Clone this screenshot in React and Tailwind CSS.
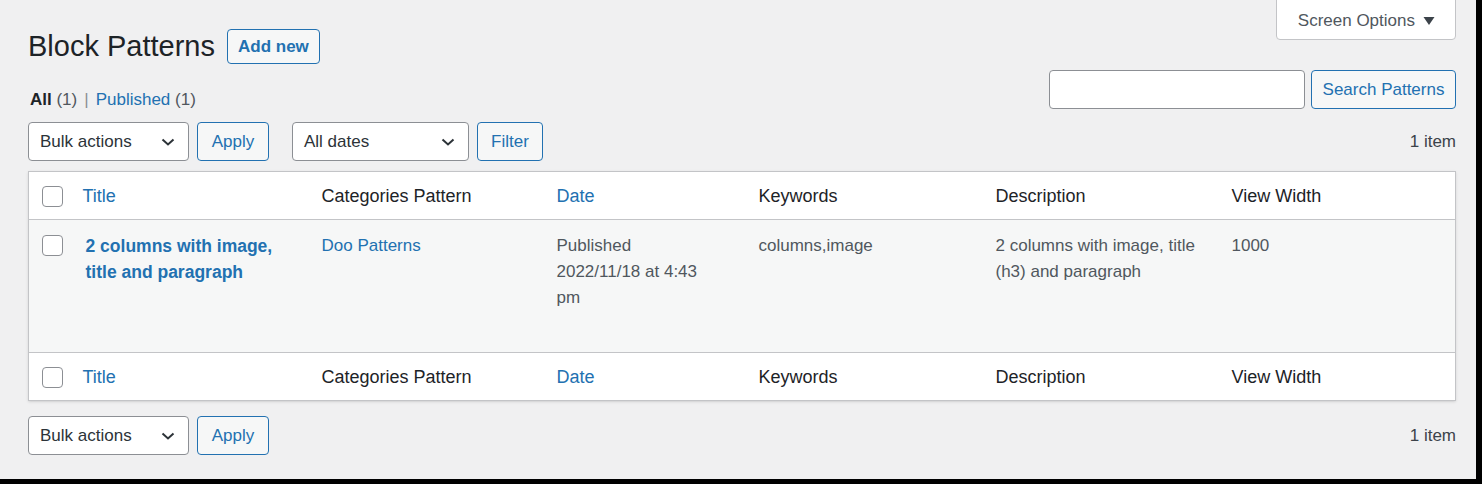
const Chevron = () => (
  <svg width="20" height="20" viewBox="0 0 20 20" className="shrink-0">
    <path d="M4.5 7.5l5.5 5 5.5-5" fill="none" stroke="#2c3338" strokeWidth="2" />
  </svg>
);

const Select = ({ label, width }) => (
  <div
    className={`flex items-center justify-between h-[39px] ${width} pl-[11px] pr-[10px] pt-px bg-white border border-[#8c8f94] rounded-[4px] text-[17px] text-[#2c3338]`}
  >
    <span>{label}</span>
    <Chevron />
  </div>
);

const Button = ({ children, className = '' }) => (
  <button
    className={`h-[39px] px-[10px] pt-px whitespace-nowrap bg-[#f6f7f7] border border-[#2271b1] rounded-[4px] text-[17px] text-[#2271b1] ${className}`}
  >
    {children}
  </button>
);

const Checkbox = () => (
  <span className="block w-[21px] h-[21px] bg-white border border-[#8c8f94] rounded-[4px]" />
);

const HeadRow = ({ border }) => (
  <tr className={`h-[48px] bg-white ${border}`}>
    <th className="pl-[13px] pt-[2px] align-middle">
      <Checkbox />
    </th>
    <th className="px-2 pt-[2px] text-left font-normal text-[#2271b1]">Title</th>
    <th className="px-2 pt-[2px] text-left font-normal">Categories Pattern</th>
    <th className="px-2 pt-[2px] text-left font-normal text-[#2271b1]">Date</th>
    <th className="px-2 pt-[2px] text-left font-normal">Keywords</th>
    <th className="px-2 pt-[2px] text-left font-normal">Description</th>
    <th className="px-2 pt-[2px] text-left font-normal">View Width</th>
  </tr>
);

export default function App() {
  return (
    <div className="w-[1482px] h-[484px] bg-black font-['Liberation_Sans',Arial,sans-serif]">
      <div className="w-[1476px] h-[479px] bg-[#f0f0f1] pl-[28px] pr-[20px] text-[#3c434a]">
        {/* Header */}
        <div className="flex justify-between items-start h-[112px]">
          <div className="pt-[29px]">
            <div className="flex items-center gap-[12px]">
              <h1 className="text-[29px] text-[#1d2327] leading-none">Block Patterns</h1>
              <button className="h-[35px] px-[10px] bg-[#f6f7f7] border border-[#2271b1] rounded-[4px] text-[17px] font-bold text-[#2271b1]">
                Add new
              </button>
            </div>
            <div className="mt-[23px] pl-[2px] text-[17px] leading-[26px] text-[#50575e]">
              <span className="font-bold text-[#1d2327]">All</span> (1)
              <span className="text-[#8c8f94] px-[7px]">|</span>
              <span className="text-[#2271b1]">Published</span> (1)
            </div>
          </div>
          <div className="flex flex-col items-end">
            <div className="flex items-center gap-[8px] h-[41px] -mt-px pt-[2px] pl-[21px] pr-[20px] bg-white border border-[#c3c4c7] rounded-b-[4px] text-[17px] text-[#50575e]">
              <span>Screen Options</span>
              <svg width="12" height="10" viewBox="0 0 12 10">
                <path d="M0.5 1h11L6 9z" fill="#3c434a" />
              </svg>
            </div>
            <div className="flex gap-[6px] mt-[30px]">
              <div className="w-[256px] h-[39px] bg-white border border-[#8c8f94] rounded-[4px]" />
              <Button className="w-[145px]">Search Patterns</Button>
            </div>
          </div>
        </div>

        {/* Top tablenav */}
        <div className="flex items-center mt-[10px] h-[39px]">
          <Select label="Bulk actions" width="w-[161px]" />
          <Button className="ml-[8px] w-[72px]">Apply</Button>
          <Select label="All dates" width="w-[177px] ml-[23px]" />
          <Button className="ml-[8px] w-[66px]">Filter</Button>
          <span className="ml-auto text-[17px]">1 item</span>
        </div>

        {/* Table */}
        <table className="mt-[10px] w-full table-fixed border-collapse border border-[#c3c4c7] text-[18px] text-[#1d2327] shadow-sm">
          <colgroup>
            <col className="w-[46px]" />
            <col className="w-[239px]" />
            <col className="w-[235px]" />
            <col className="w-[202px]" />
            <col className="w-[237px]" />
            <col className="w-[236px]" />
            <col />
          </colgroup>
          <thead>
            <HeadRow border="border-b border-[#c3c4c7]" />
          </thead>
          <tbody>
            <tr className="h-[133px] bg-[#f6f7f7] align-top text-[17px] leading-[26px] text-[#50575e]">
              <td className="pl-[13px] pt-[15px]">
                <Checkbox />
              </td>
              <td className="pl-[11px] pr-2 pt-[13px] text-[17.5px] font-bold text-[#2271b1]">
                2 columns with image,
                <br />
                title and paragraph
              </td>
              <td className="px-2 pt-[13px] text-[#2271b1]">Doo Patterns</td>
              <td className="px-2 pt-[13px]">
                Published
                <br />
                2022/11/18 at 4:43
                <br />
                pm
              </td>
              <td className="px-2 pt-[13px]">columns,image</td>
              <td className="px-2 pt-[13px]">
                2 columns with image, title
                <br />
                (h3) and paragraph
              </td>
              <td className="px-2 pt-[13px]">1000</td>
            </tr>
          </tbody>
          <tfoot>
            <HeadRow border="border-t border-[#c3c4c7]" />
          </tfoot>
        </table>

        {/* Bottom tablenav */}
        <div className="flex items-center mt-[15px] h-[39px]">
          <Select label="Bulk actions" width="w-[161px]" />
          <Button className="ml-[8px] w-[72px]">Apply</Button>
          <span className="ml-auto text-[17px]">1 item</span>
        </div>
      </div>
    </div>
  );
}
